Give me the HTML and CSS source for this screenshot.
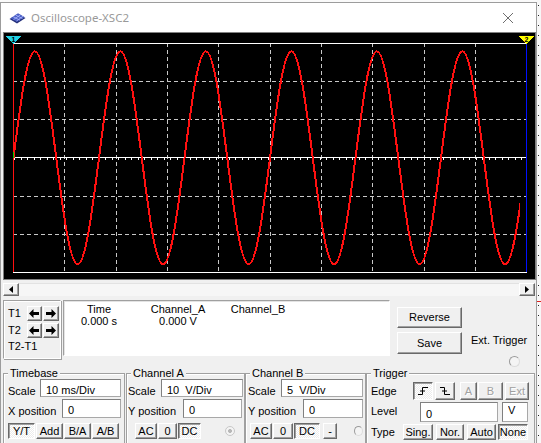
FILE: index.html
```html
<!DOCTYPE html>
<html lang="en">
  <head>
    <meta charset="UTF-8" />
    <title>Oscilloscope-XSC2</title>
    <link rel="stylesheet" href="styles.css">
  </head>
  <body>
    <div class="window">
      <div class="titlebar">
        <svg class="app-icon" width="17" height="12" viewBox="0 0 17 12">
          <polygon points="0.5,7 9,2 16.5,6 8,11.5" fill="#232f7a" />
          <polygon points="1.5,6.2 9,1.2 15.5,5 8,9.8" fill="#4b5fc4" />
          <path d="M4 4.6L11 8.2M6.5 3L13.5 6.6M4.5 7.6L11.5 2.8M7.5 9L14 4.2" stroke="#a9b6ff" stroke-width="0.8" />
        </svg>
        <span class="title">Oscilloscope-XSC2</span>
        <svg class="close" width="10" height="10" viewBox="0 0 10 10">
          <path d="M0 0L10 10M10 0L0 10" stroke="#6e6e6e" stroke-width="1" />
        </svg>
      </div>

      <div class="screen">
        <svg class="plot" width="530" height="246" viewBox="4 33 530 246" shape-rendering="crispEdges">
          <defs>
            <clipPath id="plotclip"><rect x="13" y="40" width="507" height="236" /></clipPath>
          </defs>
          <g stroke="#c8c8c8" stroke-dasharray="4 3" fill="none">
            <path d="M13 81.5H527M13 119.5H527M13 196.5H527M13 234.5H527" />
            <path d="M64.5 43V272M116.5 43V272M167.5 43V272M218.5 43V272M270.5 43V272M321.5 43V272M372.5 43V272M424.5 43V272M475.5 43V272" />
          </g>
          <path d="M13 43.5H527M13 272.5H527M13 157.5H527" stroke="#fff" />
          <path d="M14 159H527" stroke="#fff" stroke-width="2" stroke-dasharray="1 5.5" />
          <path clip-path="url(#plotclip)" fill="none" stroke="#ff1010" stroke-width="2"
            d="M13.5 157.8c6.971 -54.56 13.639 -106.5 21.375 -106.5
               s14.404 51.94 21.375 106.5 s13.639 106.5 21.375 106.5 s14.404 -51.94 21.375 -106.5 s13.639 -106.5 21.375 -106.5
               s14.404 51.94 21.375 106.5 s13.639 106.5 21.375 106.5 s14.404 -51.94 21.375 -106.5 s13.639 -106.5 21.375 -106.5
               s14.404 51.94 21.375 106.5 s13.639 106.5 21.375 106.5 s14.404 -51.94 21.375 -106.5 s13.639 -106.5 21.375 -106.5
               s14.404 51.94 21.375 106.5 s13.639 106.5 21.375 106.5 s14.404 -51.94 21.375 -106.5 s13.639 -106.5 21.375 -106.5
               s14.404 51.94 21.375 106.5 s13.639 106.5 21.375 106.5 s14.404 -51.94 21.375 -106.5 s13.639 -106.5 21.375 -106.5
               s14.404 51.94 21.375 106.5 s13.639 106.5 21.375 106.5 s14.404 -51.94 21.375 -106.5 s13.639 -106.5 21.375 -106.5" />
          <path d="M13.5 40V272" stroke="#ff1010" />
          <path d="M526.5 40V272" stroke="#0010ff" />
          <path d="M13.5 152V158" stroke="#00d000" />
          <polygon points="6,36 21,36 13.5,44" fill="#22d3e6" />
          <text x="13.5" y="41.5" class="marker-num">1</text>
          <polygon points="519,36 534,36 526.5,44" fill="#ffff00" />
          <text x="526.5" y="41.5" class="marker-num">2</text>
        </svg>
      </div>

      <div class="hscroll">
        <div class="sb-btn">
          <svg width="4" height="7" viewBox="0 0 4 7"><polygon points="4,0 4,7 0,3.5" fill="#000" /></svg>
        </div>
        <div class="sb-track"></div>
        <div class="sb-btn">
          <svg width="4" height="7" viewBox="0 0 4 7"><polygon points="0,0 0,7 4,3.5" fill="#000" /></svg>
        </div>
      </div>

      <div class="readings">
        <div class="cursors">
          <div class="crow">
            <span class="clabel">T1</span>
            <button class="arrow-btn"><svg width="10" height="9" viewBox="0 0 10 9"><path d="M0 4.5L4.5 0V3H10V6H4.5V9Z" /></svg></button>
            <button class="arrow-btn"><svg width="10" height="9" viewBox="0 0 10 9"><path d="M10 4.5L5.5 0V3H0V6H5.5V9Z" /></svg></button>
          </div>
          <div class="crow">
            <span class="clabel">T2</span>
            <button class="arrow-btn"><svg width="10" height="9" viewBox="0 0 10 9"><path d="M0 4.5L4.5 0V3H10V6H4.5V9Z" /></svg></button>
            <button class="arrow-btn"><svg width="10" height="9" viewBox="0 0 10 9"><path d="M10 4.5L5.5 0V3H0V6H5.5V9Z" /></svg></button>
          </div>
          <div class="delta">T2-T1</div>
        </div>

        <div class="readout">
          <span>Time</span><span>Channel_A</span><span>Channel_B</span>
          <span>0.000 s</span><span>0.000 V</span><span></span>
        </div>

        <div class="actions">
          <button class="big-btn">Reverse</button>
          <button class="big-btn save">Save</button>
        </div>

        <div class="ext">
          <div>Ext. Trigger</div>
          <span class="radio ext-radio"></span>
        </div>
      </div>

      <div class="groups">
        <fieldset class="group timebase">
          <legend>Timebase</legend>
          <div class="field-row">
            <span class="lbl">Scale</span>
            <input class="box w81" type="text" value="10 ms/Div">
          </div>
          <div class="field-row second">
            <span class="lbl">X position</span>
            <input class="box w59" type="text" value="0">
          </div>
          <div class="btn-row">
            <button class="btn on w27">Y/T</button>
            <button class="btn w27">Add</button>
            <button class="btn w27">B/A</button>
            <button class="btn w27">A/B</button>
          </div>
        </fieldset>

        <fieldset class="group chan-a">
          <legend>Channel A</legend>
          <div class="field-row">
            <span class="lbl">Scale</span>
            <input class="box w82" type="text" value="10  V/Div">
          </div>
          <div class="field-row second">
            <span class="lbl">Y position</span>
            <input class="box w59 nudge" type="text" value="0">
          </div>
          <div class="btn-row indent-a">
            <button class="btn w22">AC</button>
            <button class="btn w19">0</button>
            <button class="btn on w23">DC</button>
            <span class="radio mini set gap-a"></span>
          </div>
        </fieldset>

        <fieldset class="group chan-b">
          <legend>Channel B</legend>
          <div class="field-row">
            <span class="lbl">Scale</span>
            <input class="box w82" type="text" value="5  V/Div">
          </div>
          <div class="field-row second">
            <span class="lbl">Y position</span>
            <input class="box w60" type="text" value="0">
          </div>
          <div class="btn-row indent-b">
            <button class="btn w22">AC</button>
            <button class="btn w20">0</button>
            <button class="btn on w26">DC</button>
            <button class="btn w14 apart">-</button>
            <span class="radio mini gap-b"></span>
          </div>
        </fieldset>

        <fieldset class="group trigger">
          <legend>Trigger</legend>
          <div class="trig-row edge-row">
            <span class="lbl edge-lbl">Edge</span>
            <button class="btn on tall w20">
              <svg width="10" height="8" viewBox="0 0 10 8"><path d="M0 7.5H4.5V0.5H10M2 4H7" stroke="#000" fill="none" /></svg>
            </button>
            <button class="btn tall w20 sp2">
              <svg width="10" height="8" viewBox="0 0 10 8"><path d="M0 0.5H4.5V7.5H10M2 4H7" stroke="#000" fill="none" /></svg>
            </button>
            <button class="btn tall w17 off sp5">A</button>
            <button class="btn tall w25 off sp1">B</button>
            <button class="btn tall w24 off sp2">Ext</button>
          </div>
          <div class="trig-row level-row">
            <span class="lbl level-lbl">Level</span>
            <input class="box level-box" type="text" value="0">
            <input class="box unit-box" type="text" value="V">
          </div>
          <div class="trig-row type-row">
            <span class="lbl type-lbl">Type</span>
            <button class="btn w30">Sing.</button>
            <button class="btn w28 sp3">Nor.</button>
            <button class="btn w29 sp3">Auto</button>
            <button class="btn on w30 sp2">None</button>
          </div>
        </fieldset>
      </div>
    </div>
    <div class="canvas-edge"></div>
  </body>
</html>
```

FILE: styles.css
```css
* {
  box-sizing: border-box;
}
body {
  margin: 0;
  width: 541px;
  height: 443px;
  overflow: hidden;
  display: flex;
  align-items: flex-start;
  background: #fafafa;
  font-family: "Liberation Sans", Arial, sans-serif;
  font-size: 11px;
  line-height: 13px;
  color: #000;
}
.window {
  flex: none;
  width: 537px;
  height: 441px;
  margin-top: 2px;
  border: 1px solid #9c9c9c;
  border-bottom: 0;
  background: #f0f0f0;
  overflow: hidden;
}
.canvas-edge {
  flex: 1;
  height: 443px;
  background:
    linear-gradient(#e02020, #e02020) 0 301px / 100% 1px no-repeat,
    repeating-linear-gradient(to bottom, transparent 0 5px, #222 5px 6px, transparent 6px 10px) 1px 0 / 1px 100% no-repeat,
    #f7f7f7;
}

/* title bar */
.titlebar {
  height: 29px;
  display: flex;
  align-items: center;
  padding-left: 8px;
  background: #fff;
}
.app-icon {
  margin-right: 5px;
}
.title {
  font-family: "Noto Sans", "Open Sans", sans-serif;
  font-size: 11.5px;
  color: #999;
}
.close {
  margin-left: auto;
  margin-right: 23px;
}

/* scope screen */
.screen {
  margin-left: 2px;
  height: 248px;
  border: 1px solid #808080;
  background: #000;
}
.plot {
  display: block;
}
.marker-num {
  font-family: "Liberation Sans", Arial, sans-serif;
  font-size: 7px;
  font-weight: bold;
  text-anchor: middle;
  fill: #000;
}

.hscroll {
  display: flex;
  height: 13px;
  margin: 3px 1px 0 2px;
}
.sb-btn {
  width: 16px;
  display: flex;
  align-items: center;
  justify-content: center;
  background: #f0f0f0;
  border: 1px solid;
  border-color: #fff #696969 #696969 #fff;
  box-shadow: inset -1px -1px #a0a0a0;
}
.sb-track {
  flex: 1;
  background: #f6f6f6;
  border-top: 1px solid #e2e2e2;
}

/* cursor readings */
.readings {
  display: flex;
  height: 59px;
  margin-top: 4px;
  padding-left: 2px;
}
.cursors {
  width: 58px;
  height: 59px;
  padding: 5px 0 0 4px;
  border: 1px solid #a0a0a0;
  border-right-color: #fff;
  border-bottom-color: #fff;
  box-shadow: inset 1px 1px #fff, 1px 1px #a0a0a0;
}
.crow {
  display: flex;
  align-items: center;
  height: 15px;
  margin-bottom: 2px;
}
.clabel {
  width: 19px;
}
.arrow-btn {
  width: 16px;
  height: 15px;
  margin-right: 1px;
  padding: 0;
  display: flex;
  align-items: center;
  justify-content: center;
  background: #f0f0f0;
  border: 1px solid;
  border-color: #fff #696969 #696969 #fff;
  box-shadow: inset -1px -1px #a0a0a0;
}
.arrow-btn path {
  fill: #000;
}
.delta {
  margin-top: 2px;
}
.readout {
  width: 327px;
  height: 56px;
  margin-left: 2px;
  padding-top: 2px;
  display: grid;
  grid-template-columns: 70px 88px 72px;
  grid-auto-rows: 12px;
  line-height: 12px;
  text-align: center;
  background: #fff;
  border: 1px solid #a0a0a0;
  border-right-color: #fff;
  border-bottom-color: #fff;
  box-shadow: inset 1px 1px #e3e3e3;
}
.actions {
  width: 65px;
  margin-left: 7px;
  padding-top: 7px;
  display: flex;
  flex-direction: column;
}
.big-btn {
  height: 21px;
  padding: 0;
  font: inherit;
  background: #f0f0f0;
  border: 1px solid;
  border-color: #fff #696969 #696969 #fff;
  box-shadow: inset -1px -1px #a0a0a0;
}
.big-btn.save {
  height: 22px;
  margin-top: 4px;
}
.ext {
  margin-left: 9px;
  padding-top: 34px;
}
.ext-radio {
  display: block;
  margin: 9px 0 0 38px;
}
.radio {
  width: 11px;
  height: 11px;
  border-radius: 50%;
  border: 1px solid;
  border-color: #9a9a9a #dcdcdc #dcdcdc #9a9a9a;
  background: #f4f4f4;
}
.radio.mini {
  display: block;
  width: 10px;
  height: 10px;
  margin-top: 3px;
}
.radio.set {
  background: radial-gradient(circle, #b8b8b8 0 1.8px, #f4f4f4 2.2px);
  border-color: #c8c8c8;
}

/* control groups */
.groups {
  display: flex;
  margin-top: 9px;
  padding-left: 2px;
}
.group {
  margin: 0;
  height: 80px;
  min-width: 0;
  padding: 0 3px 0 4px;
  border: 1px solid #a0a0a0;
  box-shadow: inset 1px 1px #fff;
}
.group legend {
  padding: 0 2px;
  line-height: 11px;
  background: #f0f0f0;
}
.timebase {
  width: 122px;
  margin-right: 1px;
}
.chan-a {
  width: 119px;
  padding-left: 1px;
  padding-right: 1px;
}
.chan-a legend {
  margin-left: 3px;
}
.chan-b {
  width: 121px;
  padding-left: 2px;
  padding-right: 2px;
}
.chan-b legend {
  margin-left: 2px;
}
.trigger {
  width: 169px;
}
.field-row {
  display: flex;
  justify-content: space-between;
  height: 18px;
}
.field-row.second {
  height: 19px;
  margin-top: 2px;
}
.lbl {
  padding-top: 6px;
}
.box {
  height: 100%;
  padding: 3px 5px 0;
  font: inherit;
  color: #000;
  background: #fff;
  border: 1px solid #a8a8a8;
  border-top-color: #808080;
  border-left-color: #808080;
  outline: none;
}
.nudge {
  margin-right: 1px;
}
.btn-row {
  display: flex;
  gap: 1px;
  margin-top: 5px;
}
.indent-a {
  padding-left: 7px;
}
.indent-b {
  padding-left: 2px;
}
.gap-a {
  margin-left: 23px;
}
.gap-b {
  margin-left: 16px;
}
.apart {
  margin-left: 2px;
}
.btn {
  height: 16px;
  padding: 0;
  display: flex;
  align-items: center;
  justify-content: center;
  font: inherit;
  background: #f0f0f0;
  border: 1px solid;
  border-color: #fff #696969 #696969 #fff;
  box-shadow: inset -1px -1px #a0a0a0;
}
.btn.on {
  border-color: #696969 #fff #fff #696969;
  box-shadow: inset 1px 1px #a0a0a0;
  background: repeating-conic-gradient(#fff 0 25%, #ececec 0 50%) 0 0 / 2px 2px;
}
.btn.off {
  color: #a0a0a0;
  text-shadow: 1px 1px #fff;
}
.btn.tall {
  height: 18px;
  margin-top: 3px;
}
.w14 { width: 14px; }
.w17 { width: 17px; }
.w19 { width: 19px; }
.w20 { width: 20px; }
.w22 { width: 22px; }
.w23 { width: 23px; }
.w24 { width: 24px; }
.w25 { width: 25px; }
.w26 { width: 26px; }
.w27 { width: 27px; }
.w28 { width: 28px; }
.w29 { width: 29px; }
.w30 { width: 30px; }
.w59 { width: 59px; }
.w60 { width: 60px; }
.w81 { width: 81px; }
.w82 { width: 82px; }

.trig-row {
  display: flex;
  align-items: flex-start;
}
.edge-row {
  height: 21px;
}
.level-row {
  height: 20px;
  margin-top: 2px;
}
.type-row {
  height: 16px;
  margin-top: 2px;
}
.btn-row .btn,
.trig-row .btn {
  flex: none;
}
.sp1 { margin-left: 1px; }
.sp2 { margin-left: 2px; }
.sp3 { margin-left: 3px; }
.sp5 { margin-left: 5px; }
.edge-lbl {
  width: 42px;
}
.level-lbl {
  width: 49px;
  padding-top: 3px;
}
.type-lbl {
  width: 32px;
  padding-top: 2px;
}
.level-box {
  width: 78px;
  padding-top: 4px;
}
.unit-box {
  width: 26px;
  margin-left: 4px;
  padding: 0 5px 4px;
}
```
